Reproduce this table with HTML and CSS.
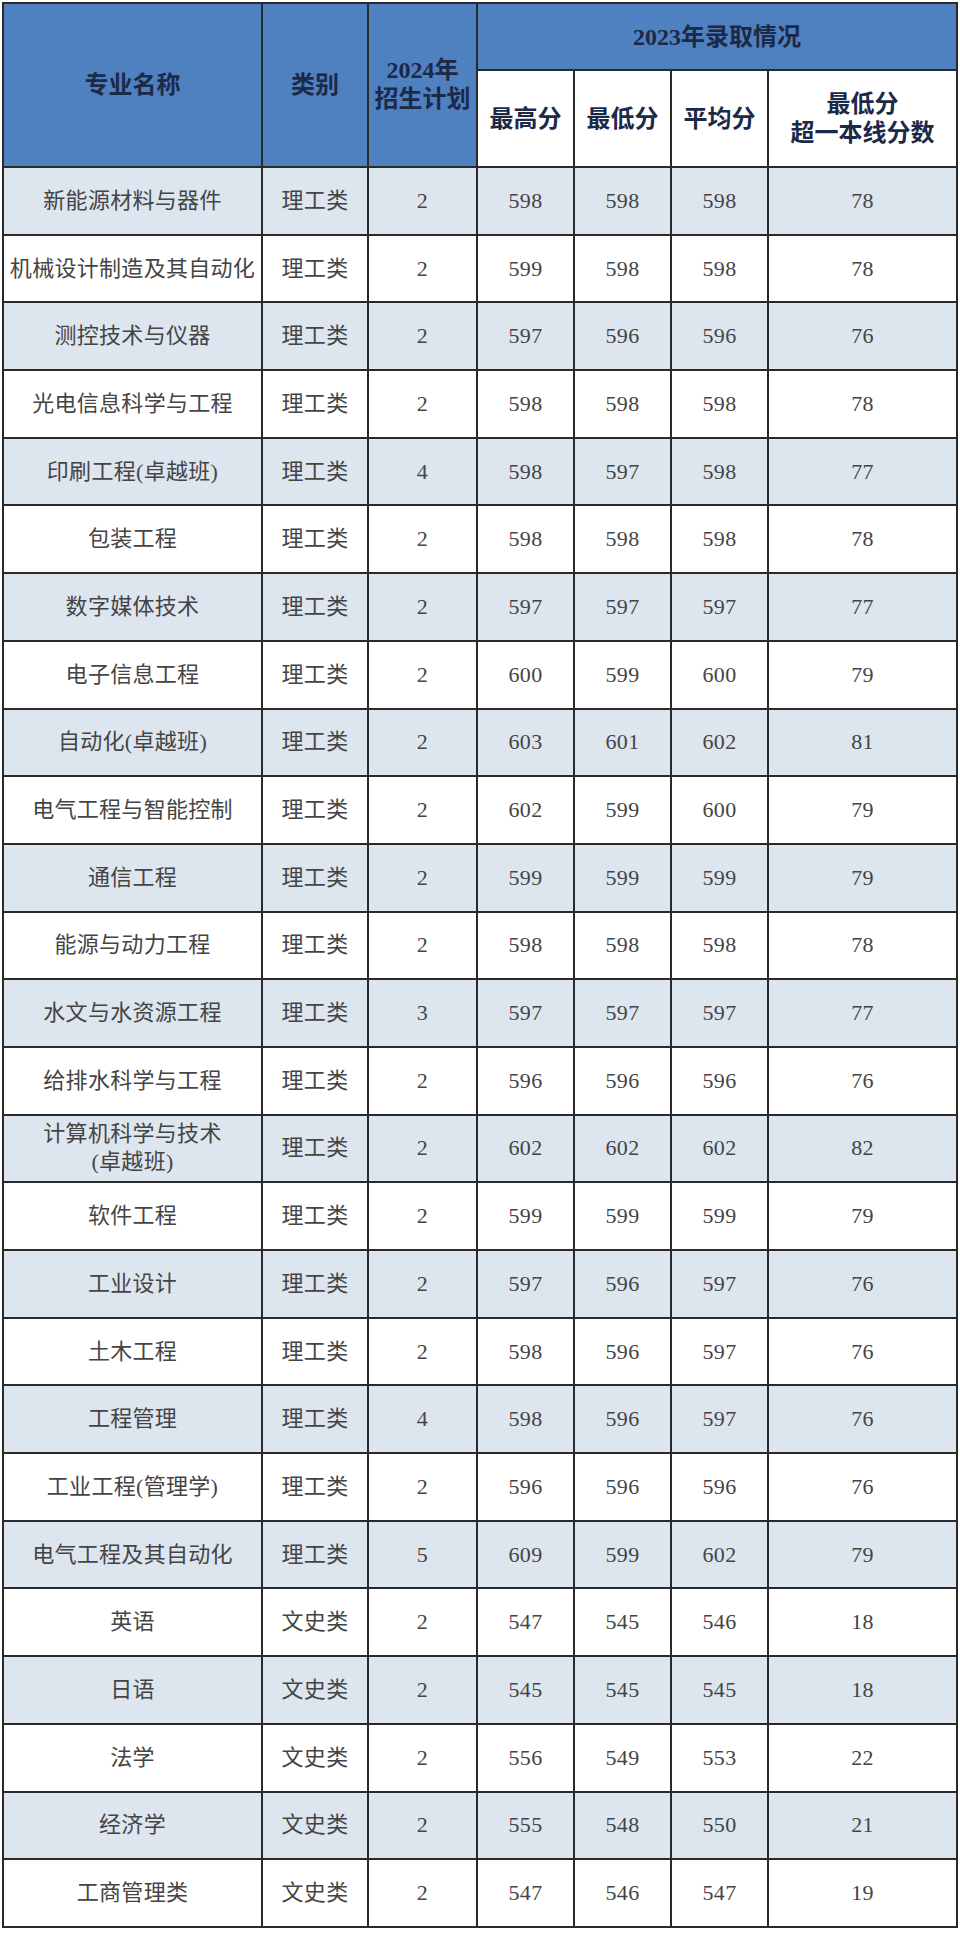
FILE: index.html
```html
<!DOCTYPE html>
<html lang="zh-CN">
<head>
<meta charset="utf-8">
<title>2024年招生计划</title>
<link rel="stylesheet" href="styles.css">
</head>
<body>
<table class="plan">
  <colgroup>
    <col class="c-name"><col class="c-type"><col class="c-plan">
    <col class="c-num"><col class="c-num"><col class="c-num"><col class="c-over">
  </colgroup>
  <thead>
    <tr class="h1">
      <th rowspan="2">专业名称</th>
      <th rowspan="2">类别</th>
      <th rowspan="2" class="two">2024年<br>招生计划</th>
      <th colspan="4">2023年录取情况</th>
    </tr>
    <tr class="h2">
      <th>最高分</th>
      <th>最低分</th>
      <th>平均分</th>
      <th class="two">最低分<br>超一本线分数</th>
    </tr>
  </thead>
  <tbody>
    <tr><td>新能源材料与器件</td><td>理工类</td><td>2</td><td>598</td><td>598</td><td>598</td><td>78</td></tr>
    <tr><td>机械设计制造及其自动化</td><td>理工类</td><td>2</td><td>599</td><td>598</td><td>598</td><td>78</td></tr>
    <tr><td>测控技术与仪器</td><td>理工类</td><td>2</td><td>597</td><td>596</td><td>596</td><td>76</td></tr>
    <tr><td>光电信息科学与工程</td><td>理工类</td><td>2</td><td>598</td><td>598</td><td>598</td><td>78</td></tr>
    <tr><td>印刷工程(卓越班)</td><td>理工类</td><td>4</td><td>598</td><td>597</td><td>598</td><td>77</td></tr>
    <tr><td>包装工程</td><td>理工类</td><td>2</td><td>598</td><td>598</td><td>598</td><td>78</td></tr>
    <tr><td>数字媒体技术</td><td>理工类</td><td>2</td><td>597</td><td>597</td><td>597</td><td>77</td></tr>
    <tr><td>电子信息工程</td><td>理工类</td><td>2</td><td>600</td><td>599</td><td>600</td><td>79</td></tr>
    <tr><td>自动化(卓越班)</td><td>理工类</td><td>2</td><td>603</td><td>601</td><td>602</td><td>81</td></tr>
    <tr><td>电气工程与智能控制</td><td>理工类</td><td>2</td><td>602</td><td>599</td><td>600</td><td>79</td></tr>
    <tr><td>通信工程</td><td>理工类</td><td>2</td><td>599</td><td>599</td><td>599</td><td>79</td></tr>
    <tr><td>能源与动力工程</td><td>理工类</td><td>2</td><td>598</td><td>598</td><td>598</td><td>78</td></tr>
    <tr><td>水文与水资源工程</td><td>理工类</td><td>3</td><td>597</td><td>597</td><td>597</td><td>77</td></tr>
    <tr><td>给排水科学与工程</td><td>理工类</td><td>2</td><td>596</td><td>596</td><td>596</td><td>76</td></tr>
    <tr><td class="two">计算机科学与技术<br>(卓越班)</td><td>理工类</td><td>2</td><td>602</td><td>602</td><td>602</td><td>82</td></tr>
    <tr><td>软件工程</td><td>理工类</td><td>2</td><td>599</td><td>599</td><td>599</td><td>79</td></tr>
    <tr><td>工业设计</td><td>理工类</td><td>2</td><td>597</td><td>596</td><td>597</td><td>76</td></tr>
    <tr><td>土木工程</td><td>理工类</td><td>2</td><td>598</td><td>596</td><td>597</td><td>76</td></tr>
    <tr><td>工程管理</td><td>理工类</td><td>4</td><td>598</td><td>596</td><td>597</td><td>76</td></tr>
    <tr><td>工业工程(管理学)</td><td>理工类</td><td>2</td><td>596</td><td>596</td><td>596</td><td>76</td></tr>
    <tr><td>电气工程及其自动化</td><td>理工类</td><td>5</td><td>609</td><td>599</td><td>602</td><td>79</td></tr>
    <tr><td>英语</td><td>文史类</td><td>2</td><td>547</td><td>545</td><td>546</td><td>18</td></tr>
    <tr><td>日语</td><td>文史类</td><td>2</td><td>545</td><td>545</td><td>545</td><td>18</td></tr>
    <tr><td>法学</td><td>文史类</td><td>2</td><td>556</td><td>549</td><td>553</td><td>22</td></tr>
    <tr><td>经济学</td><td>文史类</td><td>2</td><td>555</td><td>548</td><td>550</td><td>21</td></tr>
    <tr><td>工商管理类</td><td>文史类</td><td>2</td><td>547</td><td>546</td><td>547</td><td>19</td></tr>
  </tbody>
</table>
</body>
</html>
```

FILE: styles.css
```css
html, body {
  margin: 0;
  padding: 0;
  background: #ffffff;
}

body {
  padding: 2px 0 0 2px;
  font-family: "Liberation Serif", "Noto Sans CJK SC", serif;
}

.plan {
  border-collapse: collapse;
  table-layout: fixed;
  width: 954px;
  border: 2px solid #2a2a2a;
}

.c-name { width: 259px; }
.c-type { width: 106px; }
.c-plan { width: 109px; }
.c-num  { width: 97px; }
.c-over { width: 189px; }

.plan th,
.plan td {
  border: 2px solid #2a2a2a;
  padding: 0;
  text-align: center;
  vertical-align: middle;
  white-space: nowrap;
}

.plan th {
  font-size: 24px;
  font-weight: bold;
  color: #1c2947;
  line-height: 30px;
}

.h1 th {
  background: #4f80c0;
  height: 65px;
}

.h2 th {
  background: #ffffff;
  height: 95px;
}

.plan th.two {
  line-height: 29px;
}

.plan td {
  height: 65.7px;
  font-size: 22px;
  letter-spacing: 0.3px;
  color: #444444;
  line-height: 28px;
}

.plan tbody tr:nth-child(odd) td {
  background: #dde5ef;
}

.plan tbody tr:nth-child(even) td {
  background: #ffffff;
}

.plan td.two {
  line-height: 28px;
}
```
